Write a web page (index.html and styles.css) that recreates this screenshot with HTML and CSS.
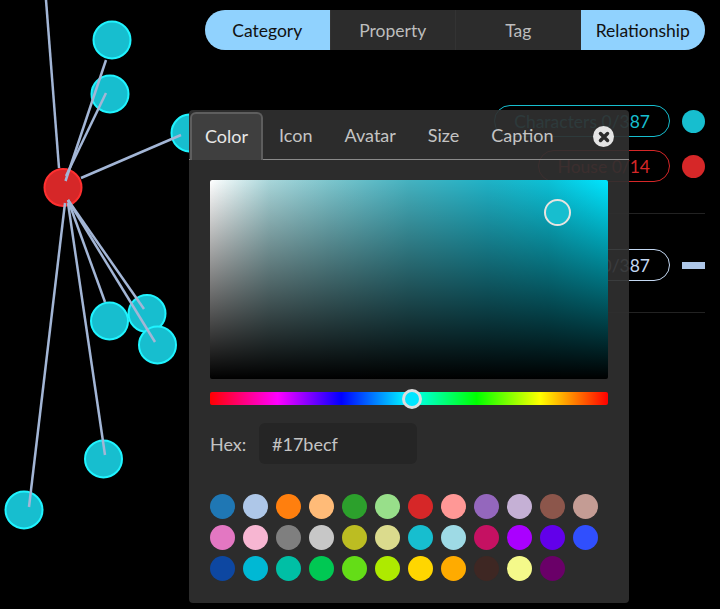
FILE: index.html

```html
<!DOCTYPE html>
<html lang="en">
<head>
  <meta charset="UTF-8" />
  <meta name="viewport" content="width=device-width, initial-scale=1" />
  <title>Graph Style</title>
  <link rel="stylesheet" href="styles.css">
</head>
<body>
  <svg class="graph" width="189" height="609" viewBox="0 0 189 609">
    <circle class="node" cx="112" cy="40" r="18.5" />
    <circle class="node" cx="110" cy="94" r="18.5" />
    <circle class="node" cx="190" cy="133" r="18.5" />
    <circle class="node" cx="109.500" cy="321" r="18.5" />
    <circle class="node" cx="147" cy="313.500" r="18.5" />
    <circle class="node" cx="157.500" cy="345" r="18.5" />
    <circle class="node" cx="103.500" cy="459" r="18.5" />
    <circle class="node" cx="24" cy="510" r="18.5" />
    <circle class="node red" cx="63" cy="187.500" r="18.5" />
    <line class="edge" x1="46" y1="0" x2="59" y2="168" />
    <line class="edge" x1="106" y1="60" x2="65.500" y2="181" />
    <line class="edge" x1="106" y1="93" x2="66" y2="176" />
    <line class="edge" x1="181" y1="135" x2="81" y2="178" />
    <line class="edge" x1="65" y1="203" x2="29" y2="507" />
    <line class="edge" x1="68" y1="203" x2="105" y2="455" />
    <line class="edge" x1="68" y1="200" x2="105" y2="302" />
    <line class="edge" x1="68" y1="200" x2="144" y2="309" />
    <line class="edge" x1="68" y1="200" x2="155" y2="342" />
  </svg>

  <div class="toggle">
    <button class="on">Category</button>
    <button>Property</button>
    <button>Tag</button>
    <button class="on">Relationship</button>
  </div>

  <div class="legend">
    <div class="legend-row teal">
      <span class="pill">Characters 0/387</span>
      <span class="dot"></span>
    </div>
    <div class="legend-row red-row">
      <span class="pill">House 0/14</span>
      <span class="dot"></span>
    </div>
    <div class="legend-sep sep-one"></div>
    <div class="legend-row blue">
      <span class="pill">Relationship 0/387</span>
      <span class="bar"></span>
    </div>
    <div class="legend-sep sep-two"></div>
  </div>

  <div class="panel">
    <div class="tabs">
      <div class="tab active">Color</div>
      <div class="tab">Icon</div>
      <div class="tab">Avatar</div>
      <div class="tab">Size</div>
      <div class="tab">Caption</div>
      <div class="close">
        <svg width="12" height="12" viewBox="0 0 12 12">
          <path d="M2.500 2.500 L9.500 9.500 M9.500 2.500 L2.500 9.500" />
        </svg>
      </div>
    </div>
    <div class="panel-body">
      <div class="sat">
        <div class="sat-handle"></div>
      </div>
      <div class="hue">
        <div class="hue-handle"></div>
      </div>
      <div class="hex">
        <label for="hexInput">Hex:</label>
        <input id="hexInput" type="text" value="#17becf" />
      </div>
      <div class="swatches" id="swatches"></div>
    </div>
  </div>

  <script>
    const colors = [
      '#1f77b4', '#aec7e8', '#ff7f0e', '#ffbb78', '#2ca02c', '#98df8a',
      '#d62728', '#ff9896', '#9467bd', '#c5b0d5', '#8c564b', '#c49c94',
      '#e377c2', '#f7b6d2', '#7f7f7f', '#c7c7c7', '#bcbd22', '#dbdb8d',
      '#17becf', '#9edae5', '#c51162', '#aa00ff', '#6200ea', '#304ffe',
      '#0d47a1', '#00b8d4', '#00bfa5', '#00c853', '#64dd17', '#aeea00',
      '#ffd600', '#ffab00', '#3e2723', '#f4f98a', '#6a0068'
    ];
    const box = document.getElementById('swatches');
    colors.forEach(function (c) {
      const s = document.createElement('span');
      s.className = 'swatch';
      s.style.backgroundColor = c;
      box.appendChild(s);
    });
  </script>
</body>
</html>
```

FILE: styles.css

```css
body {
  margin: 0;
  height: 609px;
  overflow: hidden;
  background: #000;
  font-family: Lato, "Open Sans", sans-serif;
  font-size: 17.500px;
}

/* graph */
.graph {
  position: absolute;
  left: 0;
  top: 0;
}
.node {
  fill: #17becf;
  stroke: #1ff4ff;
  stroke-width: 2;
}
.node.red {
  fill: #d62728;
  stroke: #ff3030;
}
.edge {
  stroke: #a3b6d6;
  stroke-width: 2.500;
}

/* top toggle */
.toggle {
  display: flex;
  width: 500px;
  height: 40px;
  margin: 10px 0 0 205px;
  border-radius: 20px;
  overflow: hidden;
  background: #2c2c2c;
}
.toggle button {
  flex: 1;
  padding: 0;
  border: 0;
  border-left: 1px solid #333;
  background: #2c2c2c;
  color: #bdbdbd;
  font: inherit;
}
.toggle button.on {
  background: #90d2fe;
  color: #111;
  border-left: 0;
}

/* legend on the right */
.legend {
  width: 360px;
  margin: 55px 0 0 345px;
}
.legend-row {
  display: flex;
  justify-content: flex-end;
  align-items: center;
  gap: 12px;
  height: 32px;
  margin-bottom: 13px;
}
.pill {
  height: 30px;
  line-height: 32px;
  padding: 0 19px;
  border: 1px solid;
  border-radius: 16px;
}
.dot {
  width: 23px;
  height: 23px;
  border-radius: 50%;
}
.bar {
  width: 23px;
  height: 7px;
  background: #aec7e8;
}
.teal { color: #17becf; }
.teal .dot { background: #17becf; }
.red-row { color: #d62728; }
.red-row .dot { background: #d62728; }
.blue { color: #c4d8f2; }
.legend-sep {
  height: 1px;
  background: #222;
}
.sep-one {
  margin: 31px 0 35px;
}
.sep-two {
  margin-top: 31px;
}

/* style panel */
.panel {
  position: absolute;
  left: 189px;
  top: 110px;
  width: 440px;
  height: 493px;
  box-sizing: border-box;
  border-radius: 4px;
  background: rgba(47, 47, 47, 0.93);
  font-size: 18px;
}
.tabs {
  position: relative;
  display: flex;
  height: 50px;
  box-sizing: border-box;
  padding: 2px 0 0 1px;
  border-bottom: 1px solid #8a8a8a;
  color: #c4c4c4;
}
.tab {
  padding: 0 16px;
  line-height: 46px;
}
.tab.active {
  height: 48px;
  box-sizing: border-box;
  padding: 0 13px;
  border: 2px solid #5e5e5e;
  border-bottom: 0;
  border-radius: 6px 6px 0 0;
  background: #3f3f3f;
  color: #e8e8e8;
  line-height: 44px;
}
.close {
  position: absolute;
  left: 404px;
  top: 16px;
  width: 21px;
  height: 21px;
  display: flex;
  align-items: center;
  justify-content: center;
  border-radius: 50%;
  background: #e4e4e4;
}
.close path {
  fill: none;
  stroke: #2c2c2c;
  stroke-width: 3.500;
  stroke-linecap: round;
}

.panel-body {
  padding: 20px 21px 0;
}
.sat {
  position: relative;
  height: 199px;
  border-radius: 2px;
  background:
    linear-gradient(to top, #000, rgba(0, 0, 0, 0)),
    linear-gradient(to right, #fff, #a8d6da 15%, #7cc5cd 30%, #45b2c0 50%, #1fb2c6 70%, #0cc0d6 85%, #00e5ff);
}
.sat-handle {
  position: absolute;
  left: 334px;
  top: 19px;
  width: 23px;
  height: 23px;
  border: 2px solid #e8e4e0;
  border-radius: 50%;
  background: #17becf;
}
.hue {
  position: relative;
  height: 13px;
  margin-top: 13px;
  border-radius: 2px;
  background: linear-gradient(to right, #f00, #f0f 17%, #00f 33%, #0ff 50%, #0f0 67%, #ff0 83%, #f00);
}
.hue-handle {
  position: absolute;
  left: 192px;
  top: -3px;
  width: 14px;
  height: 14px;
  border: 3px solid #ddd;
  border-radius: 50%;
  background: #00e5ff;
}
.hex {
  display: flex;
  align-items: center;
  margin-top: 18px;
  color: #c4c4c4;
}
.hex label {
  width: 49px;
}
.hex input {
  width: 158px;
  height: 41px;
  box-sizing: border-box;
  padding: 0 13px;
  border: 0;
  border-radius: 6px;
  background: #252525;
  color: #c4c4c4;
  font: inherit;
}
.swatches {
  display: grid;
  grid-template-columns: repeat(12, 25px);
  grid-auto-rows: 25px;
  gap: 6px 8px;
  margin-top: 30px;
}
.swatch {
  border-radius: 50%;
}
```
